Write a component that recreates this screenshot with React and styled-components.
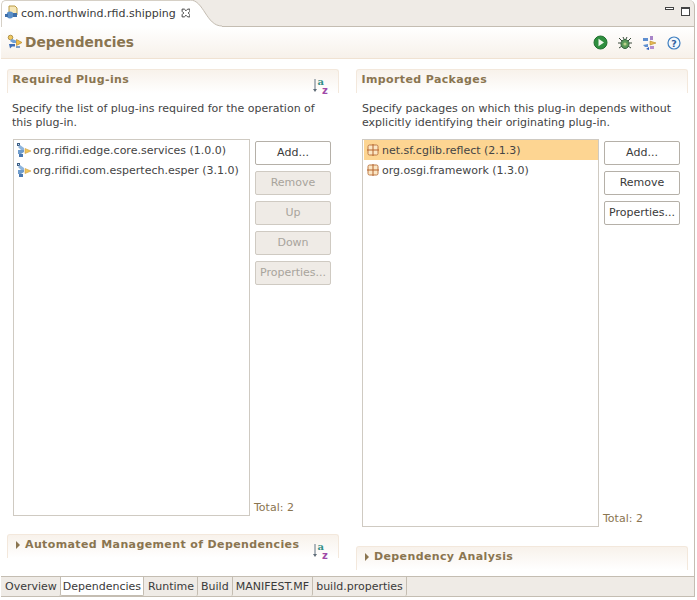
import React from 'react';
import styled, { createGlobalStyle } from 'styled-components';

const GlobalStyle = createGlobalStyle`
  html, body {
    margin: 0;
    padding: 0;
    background: #fff;
  }
  body {
    font-family: "DejaVu Sans", sans-serif;
    font-size: 11px;
    color: #444;
  }
`;

const PluginIcon = () => (
  <svg width="16" height="16" viewBox="0 0 16 16">
    <path d="M1 1h3v3H1z" fill="#3d5f86" />
    <path d="M2 2h1v1H2z" fill="#cfe0ef" />
    <path d="M4 3l4 3v2H5L2 5z" fill="#8fb5dc" />
    <path d="M2 8h6v2l-3 2H2z" fill="#6f9ccc" />
    <path d="M3 12h4v3H3z" fill="#4a78b0" />
    <path d="M9 6.500l6 2.500-6 2.500z" fill="#f0c55c" stroke="#d0a040" strokeWidth="0.6" />
  </svg>
);

const PackageIcon = () => (
  <svg width="14" height="14" viewBox="0 0 14 14">
    <rect x="2" y="2" width="10" height="10" rx="1.500" fill="#fbe6c4" stroke="#bf7a45" strokeWidth="1" />
    <path d="M7 1v12M1 7h12" stroke="#b5652e" strokeWidth="1" />
  </svg>
);

const SortIcon = () => (
  <svg width="18" height="18" viewBox="0 0 18 18">
    <path d="M3 2v10" stroke="#7d8a96" strokeWidth="1.2" />
    <path d="M1 12h4l-2 3z" fill="#5f6c78" />
    <text x="5.500" y="8" fontFamily="DejaVu Serif, serif" fontWeight="700" fontSize="10" fill="#2f8f86">a</text>
    <text x="10" y="16.500" fontFamily="DejaVu Sans, sans-serif" fontWeight="700" fontSize="10" fill="#a04aa8">z</text>
  </svg>
);

const Twistie = () => (
  <TwistieMark width="6" height="8" viewBox="0 0 6 8">
    <path d="M1 0l4 4-4 4z" fill="#8a7550" />
  </TwistieMark>
);

const FormIcon = () => (
  <svg width="16" height="16" viewBox="0 0 16 16">
    <circle cx="3.500" cy="3.500" r="2.300" fill="#f0c860" stroke="#a08030" strokeWidth="0.8" />
    <path d="M5 5l4 1.500v2.500H6L3 7z" fill="#6f9fd6" />
    <path d="M2 10h6v2.500H5l-2 2z" fill="#3f6fb8" />
    <path d="M9.500 5.500l5.500 3-5.500 3z" fill="#eebf50" stroke="#b98a25" strokeWidth="0.7" />
    <path d="M9 12h4v2H9z" fill="#7f9fc8" />
  </svg>
);

const RunIcon = () => (
  <svg width="15" height="15" viewBox="0 0 15 15">
    <circle cx="7.500" cy="7.500" r="6.500" fill="#2f8f3f" stroke="#1f6f2d" />
    <path d="M5.500 3.800l5.500 3.700-5.500 3.700z" fill="#f2f8ee" />
  </svg>
);

const BugIcon = () => (
  <svg width="16" height="16" viewBox="0 0 16 16">
    <path d="M2 3l3 3M14 3l-3 3M1 8h3M15 8h-3M2 13l3-2M14 13l-3-2M6 2l1 2M10 2L9 4" stroke="#3a4a3a" strokeWidth="1" />
    <ellipse cx="8" cy="9" rx="4" ry="4.500" fill="#5c9a5a" stroke="#2f5f3a" />
    <circle cx="8" cy="9" r="1.600" fill="#bcd08a" />
  </svg>
);

const DepsIcon = () => (
  <svg width="16" height="16" viewBox="0 0 16 16">
    <path d="M1 3h5v3H1zM1 10l5-1v3H3z" fill="#5f8fd0" />
    <path d="M4 14l3-2v3z" fill="#2f5fc0" />
    <path d="M8 1h3v4H8z" fill="#a884c8" />
    <path d="M8 6l6 2-6 2z" fill="#e8bc55" stroke="#b98a25" strokeWidth="0.6" />
    <path d="M8 11h4v3H8z" fill="#b48ed0" />
  </svg>
);

const HelpIcon = () => (
  <svg width="14" height="14" viewBox="0 0 14 14">
    <circle cx="7" cy="7" r="6" fill="#f4f8fc" stroke="#3f7fc0" strokeWidth="1.200" />
    <text x="7" y="10.500" textAnchor="middle" fontFamily="DejaVu Sans, sans-serif" fontWeight="700" fontSize="9.500" fill="#2f5f9f">?</text>
  </svg>
);

const App = () => {
  const bottomTabs = ['Overview', 'Dependencies', 'Runtime', 'Build', 'MANIFEST.MF', 'build.properties'];

  return (
    <Page>
      <GlobalStyle />
      <TabStrip>
        <EditorTab>
          <TabIcon>
            <svg width="16" height="16" viewBox="0 0 16 16">
              <path d="M5 1h6l2 2v7H5z" fill="#f6e7b8" stroke="#b99a45" />
              <circle cx="6" cy="10" r="3.400" fill="#5a8fc8" />
              <path d="M1 9h3v3H1zM9 8h4v4H9z" fill="#3f6fa8" />
            </svg>
          </TabIcon>
          <TabTitle>com.northwind.rfid.shipping</TabTitle>
          <CloseIcon viewBox="0 0 9 9">
            <path d="M1 1h2l1.500 1.500L6 1h2v2L6.500 4.500 8 6v2H6L4.500 6.500 3 8H1V6l1.500-1.500L1 3z" fill="none" stroke="#444" strokeWidth="0.900" />
          </CloseIcon>
        </EditorTab>
        <TabCurve viewBox="0 0 32 27" preserveAspectRatio="none">
          <path d="M0 0C14 0 16 26 32 26V27H0z" fill="#fff" />
          <path d="M0 0C14 0 16 26 32 26" fill="none" stroke="#c4bdb2" />
        </TabCurve>
        <TabFiller>
          <MinimizeBtn />
          <MaximizeBtn />
        </TabFiller>
      </TabStrip>

      <Editor>
        <FormHeader>
          <FormTitle>
            <FormIcon />
            <span>Dependencies</span>
          </FormTitle>
          <HeaderTools>
            <RunIcon />
            <BugIcon />
            <DepsIcon />
            <HelpIcon />
          </HeaderTools>
        </FormHeader>

        <Columns>
          <Column $gap={18}>
            <SectionBody>
              <SectionHead>
                <SectionTitle>Required Plug-ins</SectionTitle>
                <SortSlot><SortIcon /></SortSlot>
              </SectionHead>
              <Description $inset={5}>
                Specify the list of plug-ins required for the operation of this plug-in.
              </Description>
              <ListRow>
                <ListBox>
                  <ListItem><PluginIcon /><span>org.rifidi.edge.core.services (1.0.0)</span></ListItem>
                  <ListItem><PluginIcon /><span>org.rifidi.com.espertech.esper (3.1.0)</span></ListItem>
                </ListBox>
                <SideColumn>
                  <Buttons>
                    <Button>Add...</Button>
                    <Button disabled>Remove</Button>
                    <Button disabled>Up</Button>
                    <Button disabled>Down</Button>
                    <Button disabled>Properties...</Button>
                  </Buttons>
                  <Total>Total: 2</Total>
                </SideColumn>
              </ListRow>
            </SectionBody>
            <CollapsedHead $after={18}>
              <SectionTitle><Twistie />Automated Management of Dependencies</SectionTitle>
              <SortSlot><SortIcon /></SortSlot>
            </CollapsedHead>
          </Column>

          <Column $gap={19}>
            <SectionBody>
              <SectionHead>
                <SectionTitle>Imported Packages</SectionTitle>
              </SectionHead>
              <Description $inset={6}>
                Specify packages on which this plug-in depends without explicitly identifying their originating plug-in.
              </Description>
              <ListRow>
                <ListBox>
                  <ListItem $selected $package><PackageIcon /><span>net.sf.cglib.reflect (2.1.3)</span></ListItem>
                  <ListItem $package><PackageIcon /><span>org.osgi.framework (1.3.0)</span></ListItem>
                </ListBox>
                <SideColumn>
                  <Buttons>
                    <Button>Add...</Button>
                    <Button>Remove</Button>
                    <Button>Properties...</Button>
                  </Buttons>
                  <Total>Total: 2</Total>
                </SideColumn>
              </ListRow>
            </SectionBody>
            <CollapsedHead $after={6}>
              <SectionTitle><Twistie />Dependency Analysis</SectionTitle>
            </CollapsedHead>
          </Column>
        </Columns>

        <BottomTabs>
          {bottomTabs.map(tab => (
            <BottomTab key={tab} $active={tab === 'Dependencies'}>{tab}</BottomTab>
          ))}
        </BottomTabs>
      </Editor>
    </Page>
  );
};

export default App;

const Page = styled.div`
  width: 697px;
  height: 600px;
  box-sizing: border-box;
  padding: 0 2px 3px 1px;
  display: flex;
  flex-direction: column;
  overflow: hidden;
  background: #fff;
`;

const TabStrip = styled.div`
  height: 27px;
  flex: none;
  display: flex;
`;

const EditorTab = styled.div`
  width: 189px;
  flex: none;
  display: flex;
  align-items: center;
  padding: 0 0 2px 2px;
  box-sizing: border-box;
  background: #fff;
  border-left: 1px solid #d6d0c6;
  border-top: 1px solid #d6d0c6;
  border-top-left-radius: 5px;
`;

const TabIcon = styled.span`
  display: flex;
  width: 17px;
  flex: none;
`;

const TabTitle = styled.span`
  font-size: 11px;
  color: #3a3a3a;
  white-space: nowrap;
`;

const CloseIcon = styled.svg`
  width: 10px;
  height: 10px;
  flex: none;
  margin-left: 5px;
`;

const TabCurve = styled.svg`
  width: 32px;
  height: 27px;
  flex: none;
  background: #efebe6;
`;

const TabFiller = styled.div`
  flex: 1;
  display: flex;
  justify-content: flex-end;
  align-items: flex-start;
  gap: 7px;
  padding: 7px 4px 0 0;
  background: #efebe6;
  border-bottom: 1px solid #c4bdb2;
  border-right: 1px solid #c4bdb2;
  border-top-right-radius: 6px;
`;

const MinimizeBtn = styled.span`
  width: 7px;
  height: 1px;
  border: 1px solid #444;
  background: #fff;
`;

const MaximizeBtn = styled.span`
  width: 7px;
  height: 6px;
  border: 1px solid #444;
  border-top-width: 2px;
  background: #fff;
`;

const Editor = styled.div`
  flex: 1;
  min-height: 0;
  display: flex;
  flex-direction: column;
  border-right: 1px solid #c4bdb2;
`;

const FormHeader = styled.div`
  height: 32px;
  flex: none;
  box-sizing: border-box;
  display: flex;
  align-items: center;
  justify-content: space-between;
  padding: 0 13px 0 6px;
  background: linear-gradient(#fff, #f7f1ea);
  border-bottom: 1px solid #f0e2d2;
`;

const FormTitle = styled.div`
  display: flex;
  align-items: center;
  gap: 2px;
  padding-bottom: 2px;
  font-size: 13.750px;
  font-weight: 700;
  color: #8a7550;
`;

const HeaderTools = styled.div`
  display: flex;
  align-items: center;
  gap: 9px;
`;

const Columns = styled.div`
  flex: 1;
  min-height: 0;
  display: grid;
  grid-template-columns: 332px 332px;
  column-gap: 17px;
  padding: 10px 0 0 6px;
`;

const Column = styled.div`
  min-height: 0;
  display: flex;
  flex-direction: column;
  gap: ${props => props.$gap}px;
`;

const SectionBody = styled.div`
  flex: 1;
  min-height: 0;
  display: flex;
  flex-direction: column;
`;

const SectionHead = styled.div`
  height: 24px;
  flex: none;
  position: relative;
  box-sizing: border-box;
  padding: 3px 0 0 4.500px;
  border: 1px solid #f3e8dc;
  border-bottom: none;
  border-radius: 3px 3px 0 0;
  background: linear-gradient(#f8f2eb, #fff);
`;

const CollapsedHead = styled(SectionHead)`
  margin-bottom: ${props => props.$after}px;
`;

const SectionTitle = styled.div`
  display: flex;
  align-items: center;
  gap: 4px;
  font-size: 11px;
  font-weight: 700;
  letter-spacing: 0.380px;
  color: #8a7550;
  white-space: nowrap;
`;

const TwistieMark = styled.svg`
  flex: none;
  margin-left: 2.500px;
`;

const SortSlot = styled.span`
  position: absolute;
  top: 7px;
  right: 8px;
`;

const Description = styled.p`
  margin: 9px 5px 0 ${props => props.$inset}px;
  font-size: 11px;
  line-height: 14px;
  height: 28px;
  color: #444;
`;

const ListRow = styled.div`
  flex: 1;
  min-height: 0;
  display: flex;
  margin: 9px 0 0 6px;
`;

const ListBox = styled.div`
  width: 237px;
  flex: none;
  box-sizing: border-box;
  padding: 0 0 0 1px;
  border: 1px solid #cfcac2;
  background: #fff;
`;

const ListItem = styled.div`
  height: 20px;
  display: flex;
  align-items: center;
  gap: ${props => (props.$package ? '2px' : '1px')};
  padding-left: ${props => (props.$package ? '2px' : '1px')};
  font-size: 11px;
  white-space: nowrap;
  background: ${props => (props.$selected ? '#fdd592' : 'transparent')};
  color: #444;
`;

const SideColumn = styled.div`
  flex: 1;
  display: flex;
  flex-direction: column;
  justify-content: space-between;
  padding: 2px 8px 2px 5px;
`;

const Buttons = styled.div`
  display: flex;
  flex-direction: column;
  gap: 6px;
`;

const Button = styled.button`
  width: 76px;
  height: 24px;
  padding: 0 0 2px;
  font-family: inherit;
  font-size: 11px;
  white-space: nowrap;
  border-radius: 2px;
  border: 1px solid #b5b0a8;
  background: #fff;
  color: #3a3a3a;

  &:disabled {
    background: #efebe6;
    border-color: #cfcac2;
    color: #a8a49c;
  }
`;

const Total = styled.div`
  margin-left: -1px;
  font-size: 11px;
  color: #8a7550;
`;

const BottomTabs = styled.div`
  height: 21px;
  flex: none;
  display: flex;
  align-items: flex-start;
  padding-left: 1px;
  background: #efebe6;
  border-top: 1px solid #c4bdb2;
  border-bottom: 1px solid #c4bdb2;
  box-sizing: border-box;
`;

const BottomTab = styled.div`
  height: 19px;
  box-sizing: border-box;
  padding: 0 ${props => (props.$active ? '2px' : '3px')};
  margin: 0 ${props => (props.$active ? '1px 0 -1px' : '0')};
  display: flex;
  align-items: center;
  font-size: 11px;
  color: #3a3a3a;
  white-space: nowrap;
  border-right: 1px solid #c4bdb2;
  background: ${props => (props.$active ? '#fff' : 'transparent')};
  border-left: ${props => (props.$active ? '1px solid #c4bdb2' : 'none')};
  border-bottom: ${props => (props.$active ? '1px solid #c4bdb2' : 'none')};
  border-radius: 0 0 2px 2px;
`;
